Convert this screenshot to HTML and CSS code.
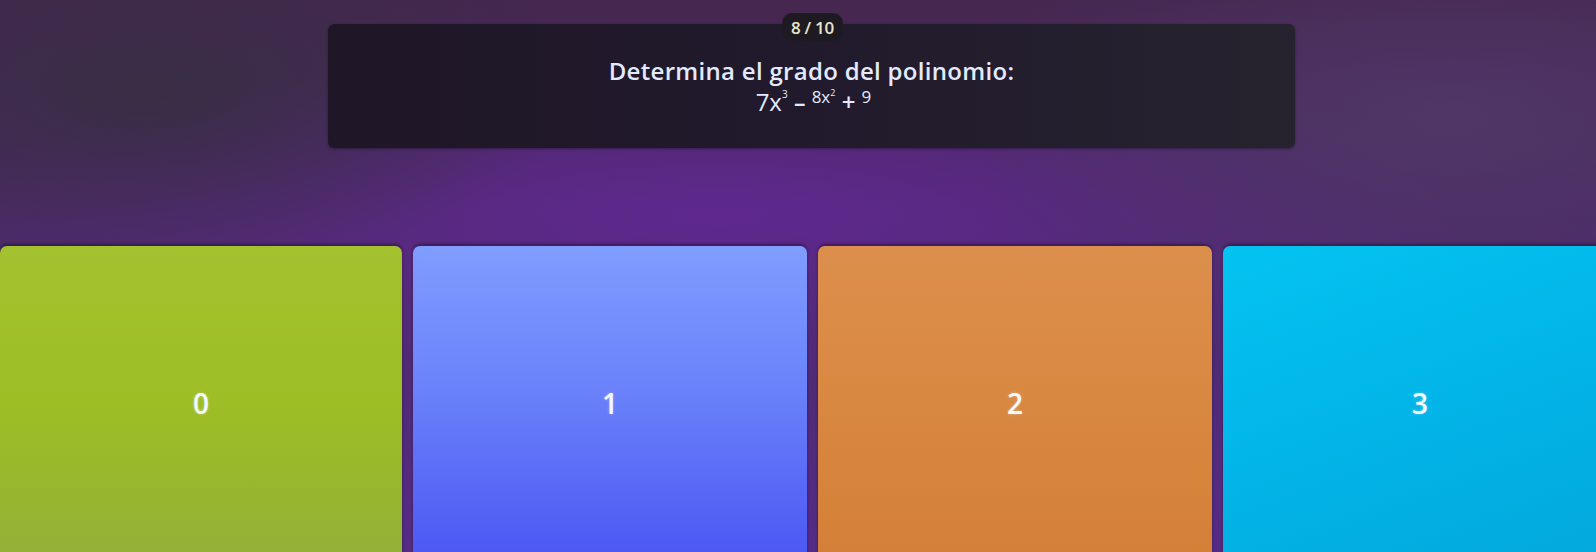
FILE: index.html
```html
<!DOCTYPE html>
<html lang="es">
<head>
<meta charset="utf-8">
<title>Quiz</title>
<link rel="stylesheet" href="styles.css">
</head>
<body>
<div class="screen">
  <div class="question-row">
    <div class="question-box">
      <div class="counter">8 / 10</div>
      <p class="question">Determina el grado del polinomio:</p>
      <p class="formula">7x<sup class="exp">3</sup> <span class="minus">–</span> <sup class="term">8x<sup class="exp2">2</sup></sup> <span class="plus">+</span> <sup class="term">9</sup></p>
    </div>
  </div>
  <div class="answers">
    <div class="card green"><span>0</span></div>
    <div class="card blue"><span>1</span></div>
    <div class="card orange"><span>2</span></div>
    <div class="card cyan"><span>3</span></div>
  </div>
</div>
</body>
</html>
```

FILE: styles.css
```css
* { box-sizing: border-box; }
html, body { margin: 0; padding: 0; }
body {
  width: 1596px;
  height: 552px;
  overflow: hidden;
  font-family: "Open Sans", "Lato", sans-serif;
  background:
    radial-gradient(ellipse 420px 180px at 150px 90px, rgba(56,46,68,0.95), rgba(56,46,68,0) 100%),
    radial-gradient(ellipse 500px 200px at 1450px 120px, rgba(80,56,104,0.9), rgba(80,56,104,0) 100%),
    radial-gradient(ellipse 760px 170px at 720px 215px, rgba(96,40,146,0.95), rgba(96,40,146,0) 100%),
    linear-gradient(180deg, #45274f 0%, #4c2a68 40%, #552b86 100%);
}
.screen {
  display: flex;
  flex-direction: column;
  height: 552px;
}
.question-row {
  display: flex;
  padding-left: 328px;
  padding-top: 24px;
}
.question-box {
  position: relative;
  width: 967px;
  height: 124px;
  border-radius: 6px;
  background: linear-gradient(90deg, #1f1727 0%, #211a2c 50%, #26232f 100%);
  box-shadow: 0 1px 3px rgba(0,0,0,0.35);
  display: flex;
  flex-direction: column;
  align-items: center;
  padding-top: 33px;
}
.counter {
  position: absolute;
  top: -11px;
  left: 454px;
  width: 61px;
  height: 28px;
  border-radius: 10px;
  background: #1d1a21;
  color: #e9e6c9;
  font-size: 17px;
  font-weight: 600;
  display: flex;
  align-items: center;
  justify-content: center;
  letter-spacing: -0.3px;
}
.question {
  margin: 0;
  color: #e3eaff;
  font-size: 24px;
  font-weight: 600;
  line-height: 28px;
  letter-spacing: 0.3px;
}
.formula {
  margin: 4px 0 0 0;
  color: #e3eaff;
  font-size: 24px;
  font-weight: 400;
  line-height: 26px;
  padding-left: 4px;
}
.formula sup { line-height: 0; }
.exp { font-size: 10px; vertical-align: 13px; }
.term { font-size: 17px; vertical-align: 8px; }
.exp2 { font-size: 9px; vertical-align: 7px; }
.minus { font-size: 23px; font-weight: 600; }
.plus { font-size: 24px; font-weight: 600; }
.answers {
  margin-top: 98px;
  display: grid;
  grid-template-columns: 402px 394px 394px 394px;
  column-gap: 11px;
}
.card {
  height: 314px;
  border-radius: 7px;
  display: flex;
  align-items: center;
  justify-content: center;
  box-shadow: 0 -2px 3px rgba(20,10,30,0.45);
}
.card span {
  color: #f4f8ff;
  font-size: 28px;
  font-weight: 600;
  text-shadow: 0 0 3px rgba(255,255,255,0.35);
}
.green { background: linear-gradient(180deg, #a4c22f 0%, #9dbe25 50%, #92b138 100%); }
.blue { background: linear-gradient(180deg, #809dff 0%, #6a82fa 45%, #4c57f3 100%); }
.orange { background: linear-gradient(180deg, #dc8f4c 0%, #d98841 50%, #d47f37 100%); }
.cyan { background: linear-gradient(160deg, #04c3f1 0%, #02b5e8 50%, #03a8dc 100%); }
```
